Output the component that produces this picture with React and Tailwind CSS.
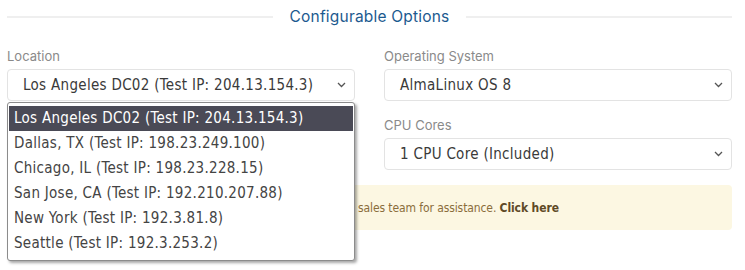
import React from "react";

const selFont = { fontFamily: '"DejaVu Sans Condensed", "DejaVu Sans", sans-serif' };

function Chevron() {
  return (
    <svg width="9" height="6" viewBox="0 0 9 6" className="shrink-0">
      <path d="M1 1 L4.5 4.5 L8 1" fill="none" stroke="#555" strokeWidth="1.3" />
    </svg>
  );
}

function Field({ label, value, first }) {
  return (
    <div className={first ? "flex flex-col" : "flex flex-col mt-[15px]"}>
      <div className="h-[18px] text-[13px] leading-[18px] text-[#8a8a8a]" style={{ fontFamily: 'Inter, sans-serif' }}>
        {label}
      </div>
      <div className="mt-[4px] h-[32px] rounded-[4px] border border-[#e3e3e3] bg-white flex items-center justify-between pl-[15px] pr-[8px]">
        <span className="text-[15px] tracking-[0.3px] text-[#3a3a3a] whitespace-nowrap" style={selFont}>{value}</span>
        <Chevron />
      </div>
    </div>
  );
}

const options = [
  "Los Angeles DC02 (Test IP: 204.13.154.3)",
  "Dallas, TX (Test IP: 198.23.249.100)",
  "Chicago, IL (Test IP: 198.23.228.15)",
  "San Jose, CA (Test IP: 192.210.207.88)",
  "New York (Test IP: 192.3.81.8)",
  "Seattle (Test IP: 192.3.253.2)",
];

export default function App() {
  return (
    <div className="relative w-[745px] h-[270px] bg-white pl-[7px] pr-[13px] overflow-hidden">
      <div className="h-[34px] flex items-center">
        <div className="flex-1 h-[2px] bg-[#efefef]" />
        <div className="mx-[17px] text-[15.5px] tracking-[0.2px] text-[#1c5a8f]" style={{ fontFamily: 'Inter, sans-serif' }}>
          Configurable Options
        </div>
        <div className="flex-1 h-[2px] bg-[#efefef]" />
      </div>
      <div className="mt-[13px] grid grid-cols-2 gap-x-[29px]">
        <div className="flex flex-col">
          <Field first label="Location" value="Los Angeles DC02 (Test IP: 204.13.154.3)" />
          <Field label="" value="" />
        </div>
        <div className="flex flex-col">
          <Field first label="Operating System" value="AlmaLinux OS 8" />
          <Field label="CPU Cores" value="1 CPU Core (Included)" />
        </div>
      </div>
      <div className="mt-[15px] h-[45px] rounded-[4px] bg-[#fcf7e2] flex items-center pl-[351px]">
        <span className="text-[12px] tracking-[-0.1px] text-[#8a6d3b] whitespace-nowrap" style={selFont}>
          sales team for assistance. <b className="text-[#5f4a26]">Click here</b>
        </span>
      </div>

      <div
        className="absolute left-[7px] top-[102px] w-[348px] h-[159px] bg-white border border-[#8c8c8c] rounded-[3px] pt-[3px] px-[1px] shadow-[2px_2px_3px_rgba(0,0,0,0.35)]"
        style={selFont}
      >
        {options.map((o, i) => (
          <div
            key={o}
            className={
              i === 0
                ? "h-[25px] flex items-center pl-[5px] text-[15px] tracking-[0.28px] bg-[#4a4a56] text-white whitespace-nowrap"
                : "h-[25px] flex items-center pl-[5px] text-[15px] tracking-[0.28px] text-[#444] whitespace-nowrap"
            }
          >
            {o}
          </div>
        ))}
      </div>
    </div>
  );
}
